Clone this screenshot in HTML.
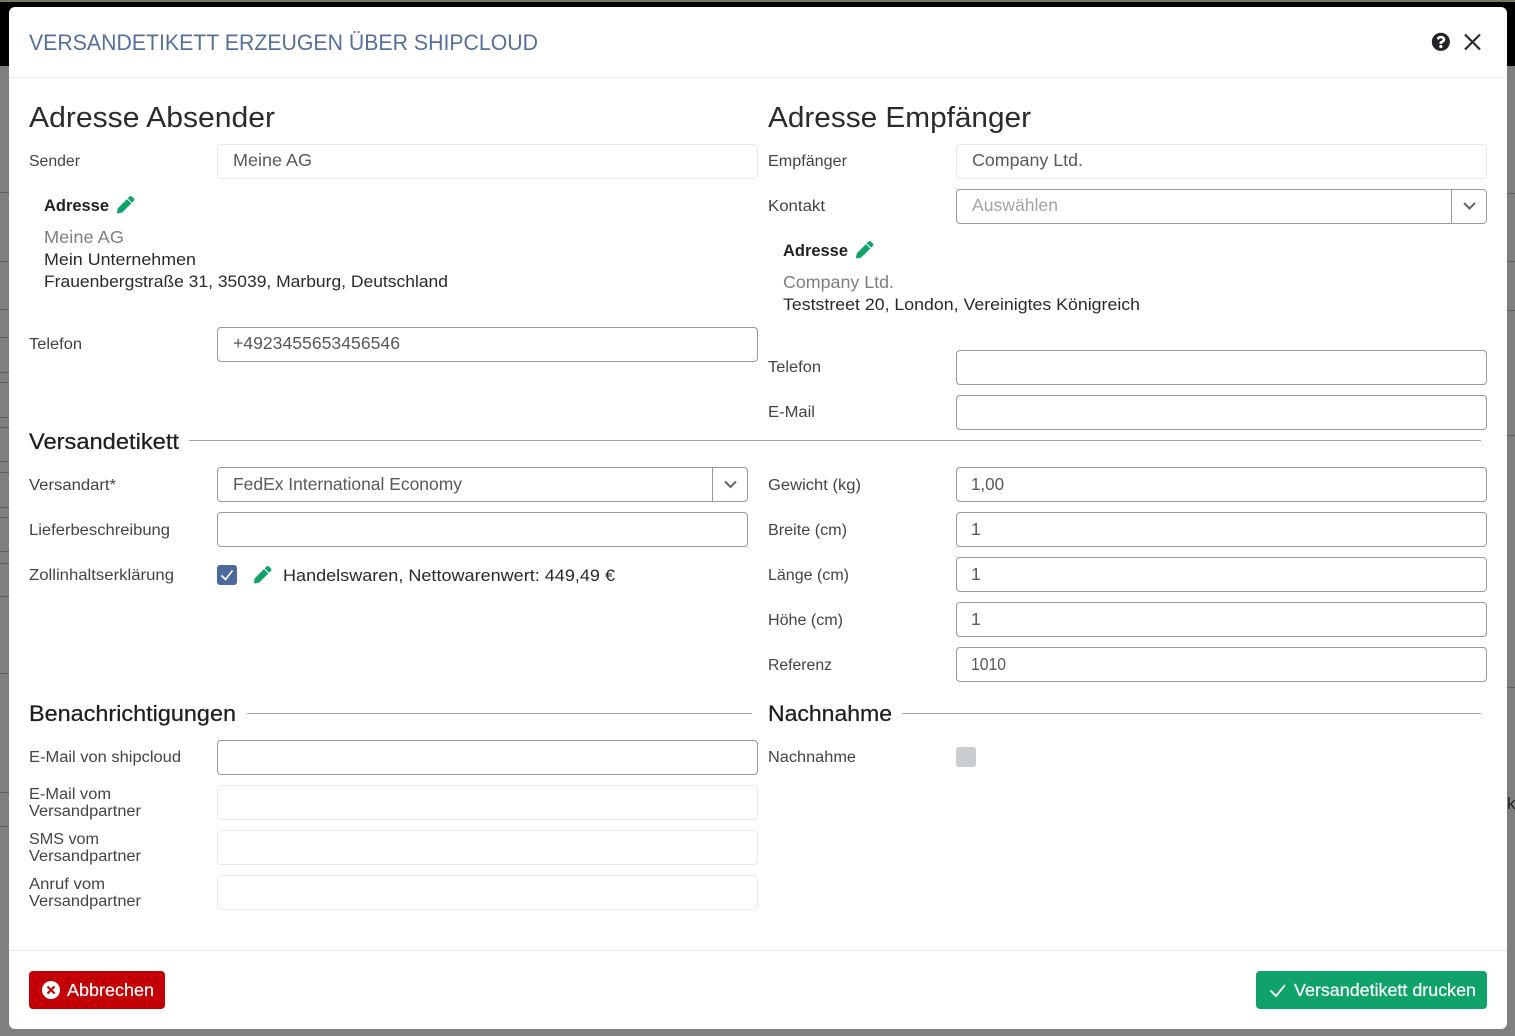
<!DOCTYPE html>
<html lang="de"><head><meta charset="utf-8"><title>Versandetikett</title>
<style>
html,body{margin:0;padding:0;width:1515px;height:1036px;overflow:hidden;background:#7f7f7f}
body{position:relative;font-family:"Liberation Sans",sans-serif}
.a{position:absolute;box-sizing:border-box}
.bgl{position:absolute;height:1px;background:#5f5f5f}
.i{position:absolute;box-sizing:border-box;height:35px;border:1px solid #9a9a9a;border-radius:4px;background:#fff}
.d{border-color:#e8e8e8}
.dv{position:absolute;top:0;bottom:0;width:1px;background:#9a9a9a}
.hr{position:absolute;height:1px;background:#a3a3a3}
svg.t{position:absolute;left:0;top:0}
svg.t text{font-family:"Liberation Sans",sans-serif;font-size:15.5px;fill:#444}
svg.t .v{font-size:17.5px;fill:#595959}
svg.t .p{font-size:17.5px;fill:#a0a4a8}
svg.t .b{font-size:17px;fill:#2a2a2a}
svg.t .g{font-size:17.5px;fill:#7a7f85}
svg.t .ad{font-size:17px;font-weight:700;fill:#222}
svg.t .h1{font-size:29px;fill:#2b2b2b}
svg.t .h2{font-size:22px;fill:#1f1f1f;stroke:#1f1f1f;stroke-width:.25px}
svg.t .ti{font-size:22.5px;fill:#557099}
svg.t .w{font-size:17.5px;fill:#fff;stroke:#fff;stroke-width:.2px}
</style></head><body>
<div class="a" style="left:0;top:0;width:1515px;height:2px;background:#77775f"></div>
<div class="a" style="left:0;top:2px;width:1515px;height:64px;background:#000"></div>
<div class="bgl" style="left:0;width:9px;top:192px"></div>
<div class="bgl" style="left:0;width:9px;top:261px"></div>
<div class="bgl" style="left:0;width:9px;top:309px"></div>
<div class="bgl" style="left:0;width:9px;top:337px"></div>
<div class="bgl" style="left:0;width:9px;top:372px"></div>
<div class="bgl" style="left:0;width:9px;top:382px"></div>
<div class="bgl" style="left:0;width:9px;top:417px"></div>
<div class="bgl" style="left:0;width:9px;top:427px"></div>
<div class="bgl" style="left:0;width:9px;top:461px"></div>
<div class="bgl" style="left:0;width:9px;top:472px"></div>
<div class="bgl" style="left:0;width:9px;top:507px"></div>
<div class="bgl" style="left:0;width:9px;top:517px"></div>
<div class="bgl" style="left:0;width:9px;top:551px"></div>
<div class="bgl" style="left:0;width:9px;top:563px"></div>
<div class="bgl" style="left:0;width:9px;top:596px"></div>
<div class="bgl" style="left:0;width:9px;top:673px"></div>
<div class="bgl" style="left:0;width:9px;top:792px"></div>
<div class="bgl" style="left:0;width:9px;top:826px"></div>
<div class="bgl" style="left:1507px;width:8px;top:193px"></div>
<div class="bgl" style="left:1507px;width:8px;top:261px"></div>
<div class="bgl" style="left:1507px;width:8px;top:310px"></div>
<div class="bgl" style="left:1507px;width:8px;top:435px"></div>
<div class="bgl" style="left:1507px;width:8px;top:687px"></div>

<div class="a" style="left:9px;top:7px;width:1498px;height:1022px;background:#fff;border-radius:6px"></div>
<div class="a" style="left:9px;top:77px;width:1498px;height:1px;background:#eee"></div>
<div class="a" style="left:9px;top:950px;width:1498px;height:1px;background:#e9e9e9"></div>

<div class="i d" style="left:217px;top:144px;width:541px"></div>
<div class="i" style="left:217px;top:327px;width:541px"></div>
<div class="i" style="left:217px;top:467px;width:531px"><div class="dv" style="left:494px"></div></div>
<div class="i" style="left:217px;top:512px;width:531px"></div>
<div class="i" style="left:217px;top:740px;width:541px"></div>
<div class="i d" style="left:217px;top:785px;width:541px"></div>
<div class="i d" style="left:217px;top:830px;width:541px"></div>
<div class="i d" style="left:217px;top:875px;width:541px"></div>
<div class="i d" style="left:956px;top:144px;width:531px"></div>
<div class="i" style="left:956px;top:189px;width:531px"><div class="dv" style="left:494px"></div></div>
<div class="i" style="left:956px;top:350px;width:531px"></div>
<div class="i" style="left:956px;top:395px;width:531px"></div>
<div class="i" style="left:956px;top:467px;width:531px"></div>
<div class="i" style="left:956px;top:512px;width:531px"></div>
<div class="i" style="left:956px;top:557px;width:531px"></div>
<div class="i" style="left:956px;top:602px;width:531px"></div>
<div class="i" style="left:956px;top:647px;width:531px"></div>

<div class="hr" style="left:189px;top:440px;width:1292px"></div>
<div class="hr" style="left:247px;top:713px;width:505px"></div>
<div class="hr" style="left:902px;top:713px;width:579px"></div>

<div class="a" style="left:217px;top:565px;width:20px;height:20px;background:#4c6b9c;border-radius:3px"></div>
<div class="a" style="left:956px;top:747px;width:20px;height:20px;background:#c8cdd2;border-radius:3px"></div>
<div class="a" style="left:29px;top:971px;width:136px;height:38px;background:#c30006;border-radius:4px"></div>
<div class="a" style="left:1256px;top:971px;width:231px;height:38px;background:#0fa36b;border-radius:4px"></div>

<svg class="t" width="1515" height="1036" viewBox="0 0 1515 1036" xmlns="http://www.w3.org/2000/svg">
<defs>
<path id="pen" d="M497.9 142.1l-46.1 46.1c-4.7 4.7-12.3 4.7-17 0l-111-111c-4.7-4.7-4.7-12.3 0-17l46.1-46.1c18.7-18.7 49.1-18.7 67.9 0l60.1 60.1c18.8 18.7 18.8 49.1 0 67.9zM284.2 99.8L21.6 362.4.4 483.9c-2.9 16.4 11.4 30.6 27.8 27.8l121.5-21.3 262.6-262.6c4.7-4.7 4.7-12.3 0-17l-111-111c-4.8-4.7-12.4-4.7-17.1 0z"/>
</defs>
<text class="ti" x="29" y="50" textLength="509" lengthAdjust="spacingAndGlyphs">VERSANDETIKETT ERZEUGEN ÜBER SHIPCLOUD</text>
<g transform="translate(1431.5 32.5) scale(.0365)"><path fill="#212529" d="M504 256c0 136.997-111.043 248-248 248S8 392.997 8 256C8 119.083 119.043 8 256 8s248 111.083 248 248zM262.655 90c-54.497 0-89.255 22.957-116.549 63.758-3.536 5.286-2.353 12.415 2.715 16.258l34.699 26.31c5.205 3.947 12.621 3.008 16.665-2.122 17.864-22.658 30.113-35.797 57.303-35.797 20.429 0 45.698 13.148 45.698 32.958 0 14.976-12.363 22.667-32.534 33.976C247.128 238.528 216 254.941 216 296v4c0 6.627 5.373 12 12 12h56c6.627 0 12-5.373 12-12v-1.333c0-28.462 83.186-29.647 83.186-106.667 0-58.002-60.165-102-116.531-102zM256 338c-25.365 0-46 20.635-46 46 0 25.364 20.635 46 46 46s46-20.636 46-46c0-25.365-20.635-46-46-46z"/></g>
<path d="M1465 34.500L1480 49.500M1480 34.500L1465 49.500" stroke="#2b2b2b" stroke-width="2.2" fill="none"/>

<text class="h1" x="29" y="127" textLength="246" lengthAdjust="spacingAndGlyphs">Adresse Absender</text>
<text class="h1" x="768" y="127" textLength="263" lengthAdjust="spacingAndGlyphs">Adresse Empfänger</text>

<text x="29" y="166" textLength="51" lengthAdjust="spacingAndGlyphs">Sender</text>
<text class="v" x="233" y="166" textLength="79" lengthAdjust="spacingAndGlyphs">Meine AG</text>
<text class="ad" x="44" y="211" textLength="65" lengthAdjust="spacingAndGlyphs">Adresse</text>
<use href="#pen" transform="translate(117 196) scale(.034)" fill="#0fa36b"/>
<text class="g" x="44" y="243" textLength="80" lengthAdjust="spacingAndGlyphs">Meine AG</text>
<text class="b" x="44" y="265" textLength="152" lengthAdjust="spacingAndGlyphs">Mein Unternehmen</text>
<text class="b" x="44" y="287" textLength="404" lengthAdjust="spacingAndGlyphs">Frauenbergstraße 31, 35039, Marburg, Deutschland</text>
<text x="29" y="349" textLength="53" lengthAdjust="spacingAndGlyphs">Telefon</text>
<text class="v" x="233" y="349" textLength="167" lengthAdjust="spacingAndGlyphs">+4923455653456546</text>

<text x="768" y="166" textLength="79" lengthAdjust="spacingAndGlyphs">Empfänger</text>
<text class="v" x="972" y="166" textLength="111" lengthAdjust="spacingAndGlyphs">Company Ltd.</text>
<text x="768" y="211" textLength="57" lengthAdjust="spacingAndGlyphs">Kontakt</text>
<text class="p" x="972" y="211" textLength="86" lengthAdjust="spacingAndGlyphs">Auswählen</text>
<path d="M1464 203L1469.500 208.500L1475 203" stroke="#666" stroke-width="2" fill="none"/>
<text class="ad" x="783" y="256" textLength="65" lengthAdjust="spacingAndGlyphs">Adresse</text>
<use href="#pen" transform="translate(856 241) scale(.034)" fill="#0fa36b"/>
<text class="g" x="783" y="288" textLength="111" lengthAdjust="spacingAndGlyphs">Company Ltd.</text>
<text class="b" x="783" y="310" textLength="357" lengthAdjust="spacingAndGlyphs">Teststreet 20, London, Vereinigtes Königreich</text>
<text x="768" y="372" textLength="53" lengthAdjust="spacingAndGlyphs">Telefon</text>
<text x="768" y="417" textLength="47" lengthAdjust="spacingAndGlyphs">E-Mail</text>

<text class="h2" x="29" y="449" textLength="150" lengthAdjust="spacingAndGlyphs">Versandetikett</text>
<text x="29" y="490" textLength="87" lengthAdjust="spacingAndGlyphs">Versandart*</text>
<text class="v" x="233" y="490" textLength="229" lengthAdjust="spacingAndGlyphs">FedEx International Economy</text>
<path d="M725 481.500L730.500 487L736 481.500" stroke="#666" stroke-width="2" fill="none"/>
<text x="29" y="535" textLength="141" lengthAdjust="spacingAndGlyphs">Lieferbeschreibung</text>
<text x="29" y="580" textLength="145" lengthAdjust="spacingAndGlyphs">Zollinhaltserklärung</text>
<path d="M221.500 575.500L225.500 579.500L232.500 570.500" stroke="#fff" stroke-width="1.700" fill="none"/>
<use href="#pen" transform="translate(254 566) scale(.034)" fill="#0fa36b"/>
<text class="b" x="283" y="581" textLength="332" lengthAdjust="spacingAndGlyphs">Handelswaren, Nettowarenwert: 449,49 €</text>

<text x="768" y="490" textLength="93" lengthAdjust="spacingAndGlyphs">Gewicht (kg)</text>
<text class="v" x="971" y="490" textLength="33" lengthAdjust="spacingAndGlyphs">1,00</text>
<text x="768" y="535" textLength="79" lengthAdjust="spacingAndGlyphs">Breite (cm)</text>
<text class="v" x="971" y="535">1</text>
<text x="768" y="580" textLength="81" lengthAdjust="spacingAndGlyphs">Länge (cm)</text>
<text class="v" x="971" y="580">1</text>
<text x="768" y="625" textLength="75" lengthAdjust="spacingAndGlyphs">Höhe (cm)</text>
<text class="v" x="971" y="625">1</text>
<text x="768" y="670" textLength="64" lengthAdjust="spacingAndGlyphs">Referenz</text>
<text class="v" x="971" y="670" textLength="35" lengthAdjust="spacingAndGlyphs">1010</text>

<text class="h2" x="29" y="721" textLength="207" lengthAdjust="spacingAndGlyphs">Benachrichtigungen</text>
<text class="h2" x="768" y="721" textLength="124" lengthAdjust="spacingAndGlyphs">Nachnahme</text>
<text x="29" y="762" textLength="152" lengthAdjust="spacingAndGlyphs">E-Mail von shipcloud</text>
<text x="29" y="799" textLength="82" lengthAdjust="spacingAndGlyphs">E-Mail vom</text>
<text x="29" y="816" textLength="112" lengthAdjust="spacingAndGlyphs">Versandpartner</text>
<text x="29" y="844" textLength="70" lengthAdjust="spacingAndGlyphs">SMS vom</text>
<text x="29" y="861" textLength="112" lengthAdjust="spacingAndGlyphs">Versandpartner</text>
<text x="29" y="889" textLength="76" lengthAdjust="spacingAndGlyphs">Anruf vom</text>
<text x="29" y="906" textLength="112" lengthAdjust="spacingAndGlyphs">Versandpartner</text>
<text x="768" y="762" textLength="88" lengthAdjust="spacingAndGlyphs">Nachnahme</text>

<circle cx="51" cy="990" r="9" fill="#fff"/>
<path d="M47.500 986.500L54.500 993.500M54.500 986.500L47.500 993.500" stroke="#c30006" stroke-width="2" fill="none"/>
<text class="w" x="67" y="996" textLength="87" lengthAdjust="spacingAndGlyphs">Abbrechen</text>
<path d="M1270.500 990.500L1276 996L1285 985" stroke="#fff" stroke-width="1.800" fill="none"/>
<text class="w" x="1294" y="996" textLength="182" lengthAdjust="spacingAndGlyphs">Versandetikett drucken</text>
<text x="1507" y="809" style="font-size:17px;fill:#222">k</text>
</svg>
</body></html>
